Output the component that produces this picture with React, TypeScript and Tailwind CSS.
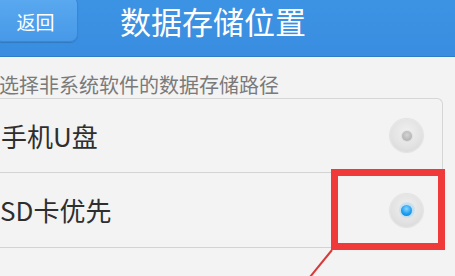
import React from "react";

function Radio({ checked }: { checked: boolean }) {
  return (
    <div className="w-[33px] h-[33px] rounded-full flex items-center justify-center bg-[radial-gradient(circle_at_50%_40%,#f0f0f0_0%,#e3e3e3_55%,#d4d4d4_100%)] shadow-[0_0_1px_1px_rgba(0,0,0,0.07)]">
      {checked ? (
        <div className="w-[16px] h-[16px] rounded-full flex items-center justify-center bg-[radial-gradient(circle,rgba(70,185,255,0.6)_0%,rgba(70,185,255,0.2)_60%,rgba(70,185,255,0)_100%)]">
          <div className="w-[11px] h-[11px] rounded-full bg-[radial-gradient(circle_at_50%_35%,#8ad6ff_0%,#1f9ff0_55%,#0a7fd6_100%)]" />
        </div>
      ) : (
        <div className="w-[10px] h-[10px] rounded-full bg-[radial-gradient(circle_at_50%_40%,#d4d4d4_0%,#b4b4b4_70%,#a0a0a0_100%)] shadow-[0_0_0_1px_rgba(0,0,0,0.05)]" />
      )}
    </div>
  );
}

export default function App() {
  const font = { fontFamily: '"Noto Sans CJK SC", "Noto Sans", sans-serif' };
  return (
    <div
      className="relative w-[455px] h-[276px] overflow-hidden bg-[#f3f3f3]"
      style={font}
    >
      <div className="h-[57px] flex items-start bg-[linear-gradient(to_bottom,#3c93e4,#3a8de0)] border-b border-[#2f7cc9]">
        <div className="shrink-0 -mt-[4px] -ml-[6px] w-[84px] h-[46px] rounded-[8px] bg-[linear-gradient(to_bottom,#5aa9f0,#4799e8)] border border-[#3a86d4] shadow-[0_1px_1px_rgba(0,0,0,0.15)] flex items-center justify-center pt-[4px] pr-[1px] text-white text-[19px] leading-none">
          返回
        </div>
        <div className="shrink-0 ml-[42px] mt-[1px] pr-[4px] text-white text-[31px] leading-[40px] whitespace-nowrap">
          数据存储位置
        </div>
      </div>
      <div className="mt-[15px] text-[#7a7a7a] text-[20px] leading-[26px] -ml-[1px]">
        选择非系统软件的数据存储路径
      </div>
      <div className="-ml-[2px] w-[445px] border-t border-r border-[#d6d6d6] rounded-tr-[6px]">
        <div className="h-[74px] flex items-center justify-between border-b border-[#d3d3d3] pl-[3px] pr-[19px]">
          <span className="text-[26px] text-[#2e2e2e] leading-none">手机U盘</span>
          <Radio checked={false} />
        </div>
        <div className="h-[75px] flex items-center justify-between border-b border-[#d3d3d3] pl-[2px] pr-[19px]">
          <span className="text-[26px] text-[#2e2e2e] leading-none">SD卡优先</span>
          <Radio checked={true} />
        </div>
      </div>
      <div className="absolute left-[331px] top-[169px] w-[114px] h-[81px] border-[7px] border-[#f03a3a]" />
      <svg className="absolute left-[306px] top-[248px]" width="28" height="28">
        <line x1="26" y1="2" x2="4" y2="29" stroke="#d83a3a" strokeWidth="2" />
      </svg>
    </div>
  );
}
